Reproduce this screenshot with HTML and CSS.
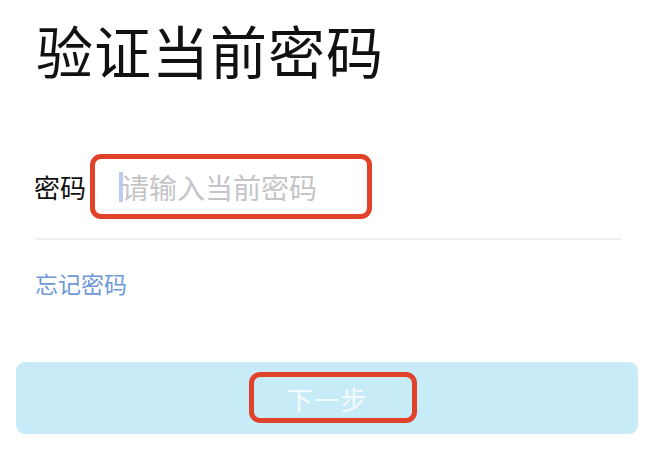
FILE: index.html
```html
<!DOCTYPE html>
<html lang="zh-CN">
<head>
<meta charset="utf-8">
<link rel="stylesheet" href="styles.css">
</head>
<body>
<div class="page">
  <h1 class="title">验证当前密码</h1>
  <div class="field">
    <span class="label">密码</span>
    <div class="input-wrap">
      <span class="caret"></span>
      <span class="placeholder">请输入当前密码</span>
      <span class="mark mark-input"></span>
    </div>
  </div>
  <div class="divider"></div>
  <a class="forgot">忘记密码</a>
  <div class="btn">
    <span class="btn-text">下一步</span>
    <span class="mark mark-btn"></span>
  </div>
</div>
</body>
</html>
```

FILE: styles.css
```css
html, body {
  margin: 0;
  padding: 0;
  background: #ffffff;
}
.page {
  width: 652px;
  height: 454px;
  font-family: "Noto Sans CJK SC", "Noto Sans", sans-serif;
  display: flex;
  flex-direction: column;
  overflow: hidden;
}
.title {
  margin: 19px 0 0 36px;
  font-size: 57px;
  line-height: 60px;
  font-weight: 400;
  color: #111;
  letter-spacing: 1px;
}
.field {
  display: flex;
  align-items: center;
  margin: 75px 0 0 34px;
  height: 65px;
}
.label {
  font-size: 26px;
  font-weight: 400;
  color: #111;
  width: 56px;
}
.input-wrap {
  position: relative;
  display: flex;
  align-items: center;
  width: 282px;
  height: 65px;
  padding-left: 29px;
  box-sizing: border-box;
}
.caret {
  width: 4px;
  height: 30px;
  background: #b9cdf2;
  margin-right: -2px;
}
.placeholder {
  font-size: 28px;
  color: #c4c4c8;
}
.mark {
  position: absolute;
  border: 5px solid #e2412a;
  border-radius: 11px;
  box-sizing: border-box;
}
.mark-input {
  left: 0;
  top: 0;
  width: 282px;
  height: 65px;
}
.divider {
  margin: 19px 30px 0 35px;
  height: 2px;
  background: #f0f0f0;
}
.forgot {
  margin: 28px 0 0 35px;
  font-size: 23px;
  color: #6f98d8;
  line-height: 30px;
}
.btn {
  position: relative;
  margin: 64px 14px 0 16px;
  height: 72px;
  border-radius: 9px;
  background: #c8ebf8;
  display: flex;
  align-items: center;
  justify-content: center;
}
.btn-text {
  font-size: 26px;
  color: #f4fbff;
  letter-spacing: 1px;
}
.mark-btn {
  left: 233px;
  top: 10px;
  width: 168px;
  height: 51px;
}
```
